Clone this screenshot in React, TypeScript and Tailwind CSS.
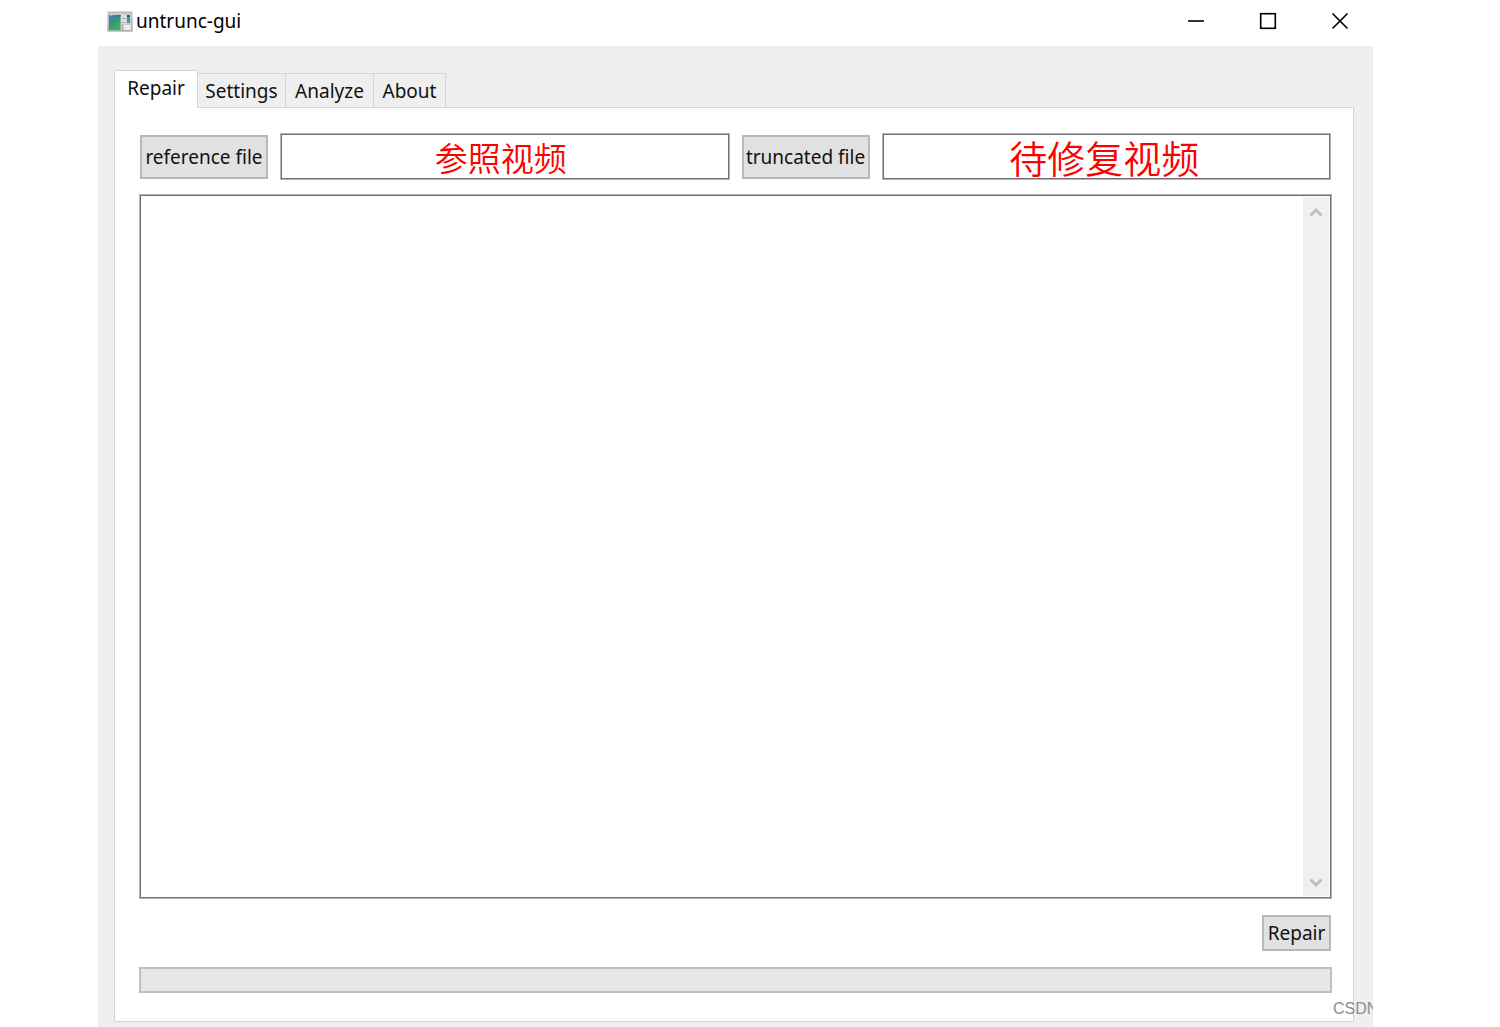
import { useState } from "react";

function AppIcon() {
  return (
    <svg width="26" height="21" viewBox="0 0 26 21" aria-hidden="true">
      <defs>
        <linearGradient id="screen" x1="0" y1="0" x2="0.6" y2="1">
          <stop offset="0" stopColor="#3f7fb8" />
          <stop offset="0.5" stopColor="#3a9478" />
          <stop offset="1" stopColor="#3fb45a" />
        </linearGradient>
        <linearGradient id="frame" x1="0" y1="0" x2="0" y2="1">
          <stop offset="0" stopColor="#bdbdbd" />
          <stop offset="1" stopColor="#8f8f8f" />
        </linearGradient>
      </defs>
      <rect x="0.5" y="0.5" width="25" height="20" fill="url(#frame)" />
      <rect x="1.5" y="2" width="23" height="17.5" fill="#c9cccd" />
      <rect x="2" y="4" width="11.5" height="15" fill="url(#screen)" />
      <rect x="2" y="4" width="11.5" height="1.5" fill="#3b6bb0" />
      <path d="M3 4.7h2M6 4.7h1" stroke="#9cc4ee" />
      <rect x="14.5" y="4" width="5" height="9" fill="#e0e3e4" />
      <path d="M15 7.5h4M15 11.5h4" stroke="#a9adb0" />
      <rect x="20" y="4" width="3" height="8" fill="#3f9a90" />
      <rect x="20" y="4" width="3" height="2" fill="#235f86" />
      <rect x="17" y="14" width="7" height="5" fill="#ececec" />
      <path d="M15.5 13v6" stroke="#b5b5b5" />
    </svg>
  );
}

const tabs = [
  { name: "Settings", width: "w-[88px]" },
  { name: "Analyze", width: "w-[88px]" },
  { name: "About", width: "w-[72px]" },
];

function FileButton({ children }: { children: string }) {
  return (
    <button
      type="button"
      className="h-11 w-32 border border-[#b8b8b8] bg-[#e1e1e1] text-center whitespace-nowrap inset-shadow-[0_0_0_1px_#b8b8b8]"
    >
      {children}
    </button>
  );
}

export default function App() {
  const [reference, setReference] = useState("参照视频");
  const [truncated, setTruncated] = useState("待修复视频");

  return (
    <div className="h-screen bg-white pr-[127px] pl-[98px] font-['Noto_Sans','Noto_Sans_CJK_SC',sans-serif] text-[19px] leading-6 text-[#111111]">
      <div className="relative flex h-full flex-col overflow-hidden bg-[#efefef]">
        <header className="flex h-[46px] shrink-0 items-center bg-white pr-6 pb-1 pl-[9px]">
          <AppIcon />
          <h1 className="ml-[3px] text-black">untrunc-gui</h1>
          <div className="ml-auto flex gap-[54px] text-black">
            <button type="button" aria-label="Minimize">
              <svg width="18" height="18" viewBox="0 0 18 18">
                <path d="M1 9h16" stroke="currentColor" strokeWidth="1.6" />
              </svg>
            </button>
            <button type="button" aria-label="Maximize">
              <svg width="18" height="18" viewBox="0 0 18 18">
                <rect x="1.7" y="1.7" width="14.6" height="14.6" fill="none" stroke="currentColor" strokeWidth="1.6" />
              </svg>
            </button>
            <button type="button" aria-label="Close">
              <svg width="18" height="18" viewBox="0 0 18 18">
                <path d="M1.5 1.5l15 15M16.5 1.5l-15 15" stroke="currentColor" strokeWidth="1.6" />
              </svg>
            </button>
          </div>
        </header>

        <main className="flex min-h-0 flex-1 flex-col pt-6 pr-[19px] pb-[5px] pl-4">
          <div role="tablist" className="z-10 -mb-px flex items-end">
            <button
              type="button"
              role="tab"
              aria-selected="true"
              className="h-[38px] w-[84px] border border-b-0 border-[#d5d5d5] bg-white pb-1"
            >
              Repair
            </button>
            {tabs.map((tab) => (
              <button
                key={tab.name}
                type="button"
                role="tab"
                aria-selected="false"
                className={`${tab.width} h-[35px] border-y border-r border-[#d5d5d5] bg-[#efefef]`}
              >
                {tab.name}
              </button>
            ))}
          </div>

          <section
            role="tabpanel"
            className="flex min-h-0 flex-1 flex-col border border-[#d5d5d5] bg-white pt-[25px] pr-[21px] pb-7 pl-6"
          >
            <div className="grid grid-cols-[auto_1fr_auto_1fr] items-center gap-3 px-px">
              <FileButton>reference file</FileButton>
              <input
                type="text"
                aria-label="reference file"
                value={reference}
                onChange={(e) => setReference(e.target.value)}
                className="h-[47px] w-full min-w-0 border border-[#b4b4b4] bg-white pr-2 text-center text-[33px] leading-10 font-[350] text-[#ff0000] inset-shadow-[0_0_0_1px_#707070]"
              />
              <FileButton>truncated file</FileButton>
              <input
                type="text"
                aria-label="truncated file"
                value={truncated}
                onChange={(e) => setTruncated(e.target.value)}
                className="h-[47px] w-full min-w-0 border border-[#b4b4b4] bg-white pr-1 text-center text-[38px] leading-10 font-[350] text-[#ff0000] inset-shadow-[0_0_0_1px_#707070]"
              />
            </div>

            <div className="mt-3.5 flex min-h-0 flex-1 border border-[#b4b4b4] bg-white p-0.5 inset-shadow-[0_0_0_1px_#707070]">
              <textarea aria-label="Output" readOnly className="min-w-0 flex-1 resize-none px-2 outline-none" />
              <div className="flex w-[26px] flex-col items-center justify-between bg-[#f0f0f0] py-2">
                <button type="button" aria-label="Scroll up">
                  <svg width="14" height="14" viewBox="0 0 14 14">
                    <path d="M1.5 10.5l5.5-5.5 5.5 5.5" fill="none" stroke="#bfbfbf" strokeWidth="3" />
                  </svg>
                </button>
                <button type="button" aria-label="Scroll down">
                  <svg width="14" height="14" viewBox="0 0 14 14">
                    <path d="M1.5 5.5l5.5 5.5 5.5-5.5" fill="none" stroke="#bfbfbf" strokeWidth="3" />
                  </svg>
                </button>
              </div>
            </div>

            <button
              type="button"
              className="mt-4 mr-px h-9 w-[69px] self-end border border-[#b8b8b8] bg-[#e1e1e1] inset-shadow-[0_0_0_1px_#b8b8b8]"
            >
              Repair
            </button>

            <progress
              aria-label="Repair progress"
              value={0}
              max={100}
              className="mt-4 block h-[26px] w-full appearance-none border-2 border-[#c0c0c0] bg-[#e6e6e6] [&::-webkit-progress-bar]:bg-[#e6e6e6]"
            />
          </section>
        </main>

        <span className="absolute bottom-1.5 left-full -ml-10 font-['Liberation_Sans',sans-serif] text-[16px] whitespace-nowrap text-[#8c8c8c]">
          CSDN
        </span>
      </div>
    </div>
  );
}
